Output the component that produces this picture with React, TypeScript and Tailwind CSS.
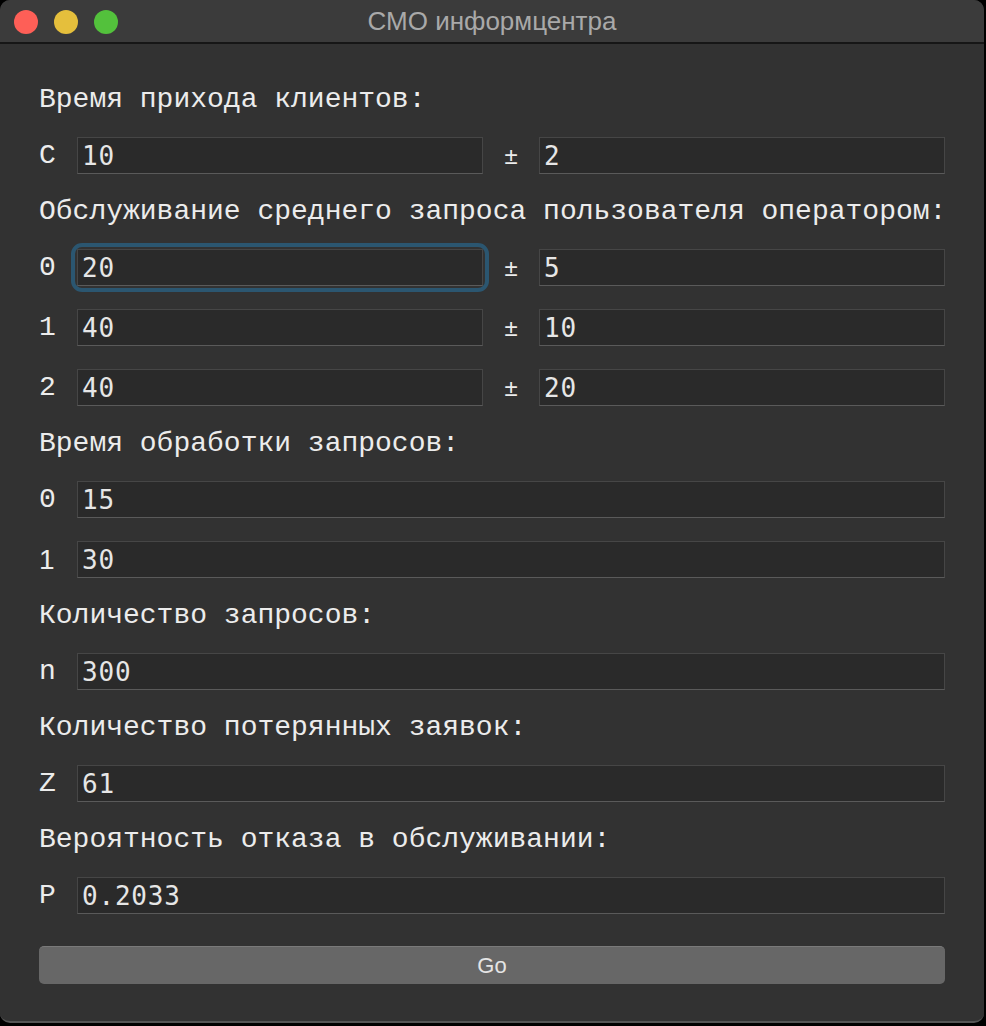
import React from "react";

const mono = { fontFamily: '"Liberation Mono", "Courier New", monospace' };
const inputFont = { fontFamily: '"DejaVu Sans Mono", Menlo, monospace' };
const sans = { fontFamily: '"Liberation Sans", Arial, sans-serif' };

function Field({ value, focused = false }: { value: string; focused?: boolean }) {
    return (
        <div
            className={`flex-1 h-[37px] rounded-[5px] ${focused ? "outline-[4px] outline outline-[#2b5670] outline-offset-[2px]" : ""}`}
        >
            <input
                readOnly
                value={value}
                style={inputFont}
                className="w-full h-full bg-[#2a2a2a] border border-[#464646] border-b-[#5a5a5a] px-[4px] text-[26px] tracking-[0.8px] text-[#e6e6e6] outline-none"
            />
        </div>
    );
}

function Label({ children, font = mono }: { children: React.ReactNode; font?: React.CSSProperties }) {
    return (
        <span style={font} className="w-[38px] shrink-0 text-[28px] leading-none text-[#ececec]">
            {children}
        </span>
    );
}

function Heading({ children }: { children: React.ReactNode }) {
    return (
        <div style={mono} className="h-[29px] flex items-center text-[28px] text-[#ececec] whitespace-nowrap">
            {children}
        </div>
    );
}

function PairRow({ label, a, b, focused }: { label: string; a: string; b: string; focused?: boolean }) {
    return (
        <div className="flex items-center">
            <Label>{label}</Label>
            <Field value={a} focused={focused} />
            <span style={sans} className="w-[56px] text-center text-[24px] text-[#ececec]">±</span>
            <Field value={b} />
        </div>
    );
}

function SingleRow({ label, value, font }: { label: string; value: string; font?: React.CSSProperties }) {
    return (
        <div className="flex items-center">
            <Label font={font}>{label}</Label>
            <Field value={value} />
        </div>
    );
}

export default function App() {
    return (
        <div className="w-[986px] h-[1026px] bg-black">
            <div className="w-[984px] h-[1023px] rounded-[10px] overflow-hidden bg-[#323232] border-b-2 border-[#555] flex flex-col">
                {/* Title bar */}
                <div className="relative h-[44px] shrink-0 bg-[#3b3b3b] border-b-2 border-[#161616] flex items-center justify-center">
                    <div className="absolute left-[14px] top-[10px] flex gap-[16px]">
                        <div className="w-[24px] h-[24px] rounded-full bg-[#fe5f57]" />
                        <div className="w-[24px] h-[24px] rounded-full bg-[#e5bf3c]" />
                        <div className="w-[24px] h-[24px] rounded-full bg-[#53c13c]" />
                    </div>
                    <span style={sans} className="text-[26px] text-[#a9a9a9]">СМО информцентра</span>
                </div>

                {/* Form */}
                <div className="flex flex-col gap-[23px] pl-[39px] pr-[39px] pt-[41px]">
                    <Heading>Время прихода клиентов:</Heading>
                    <PairRow label="C" a="10" b="2" />
                    <Heading>Обслуживание среднего запроса пользователя оператором:</Heading>
                    <PairRow label="0" a="20" b="5" focused />
                    <PairRow label="1" a="40" b="10" />
                    <PairRow label="2" a="40" b="20" />
                    <Heading>Время обработки запросов:</Heading>
                    <SingleRow label="0" value="15" />
                    <SingleRow label="1" value="30" font={sans} />
                    <Heading>Количество запросов:</Heading>
                    <SingleRow label="n" value="300" />
                    <Heading>Количество потерянных заявок:</Heading>
                    <SingleRow label="Z" value="61" />
                    <Heading>Вероятность отказа в обслуживании:</Heading>
                    <SingleRow label="P" value="0.2033" />
                    <button
                        style={sans}
                        className="mt-[9px] h-[38px] rounded-[5px] bg-[#676767] border-t border-[#7a7a7a] text-[22px] text-[#e4e4e4]"
                    >
                        Go
                    </button>
                </div>
            </div>
        </div>
    );
}
